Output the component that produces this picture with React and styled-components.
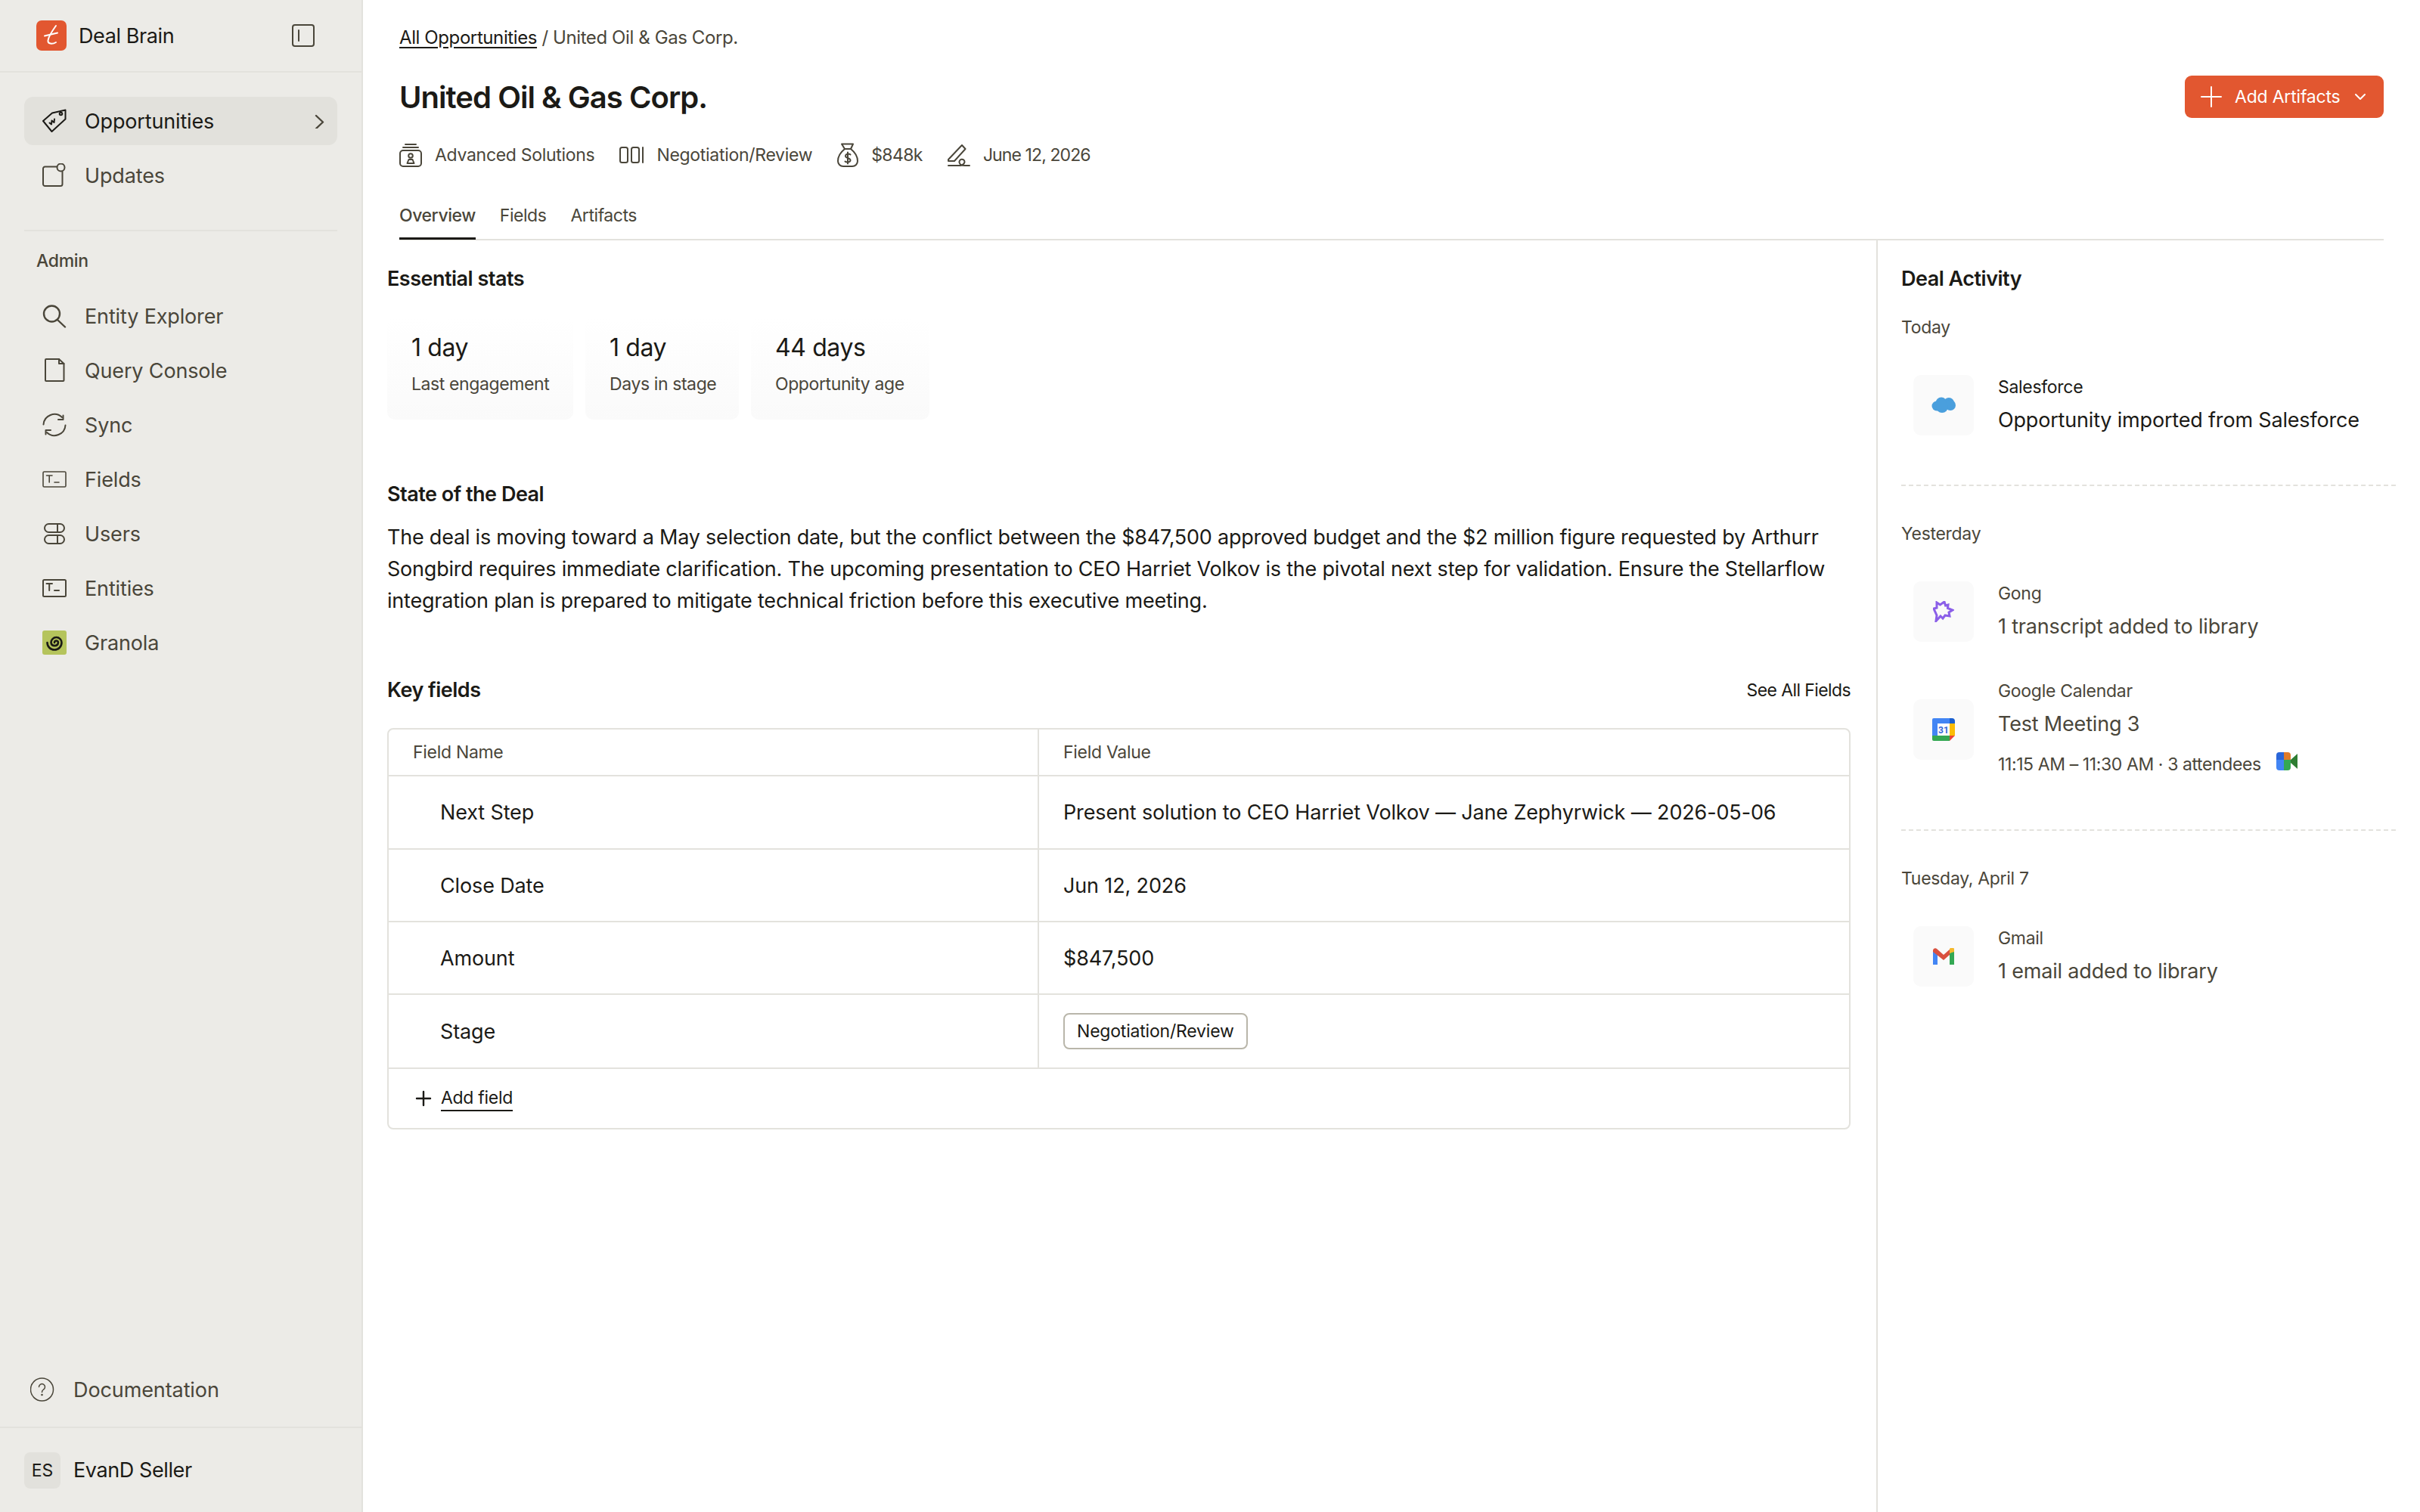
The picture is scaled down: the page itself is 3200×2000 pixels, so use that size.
import React from "react";
import styled, { createGlobalStyle } from "styled-components";

const ink = "#1b1a16";
const muted = "#4a463a";
const line = "#e3e2dd";
const orange = "#e25730";

const Global = createGlobalStyle`
  html, body { margin: 0; padding: 0; background: #fff; }
  body { font-family: Inter, "Liberation Sans", sans-serif; color: ${ink}; }
  * { box-sizing: border-box; }
`;

const Page = styled.div`
  display: flex;
  width: 3200px;
  height: 2000px;
  overflow: hidden;
`;

const Sidebar = styled.aside`
  width: 480px;
  flex: none;
  display: flex;
  flex-direction: column;
  background: #ecebe7;
  border-right: 2px solid ${line};
`;

const Brand = styled.div`
  height: 96px;
  flex: none;
  display: flex;
  align-items: center;
  padding: 0 62px 0 48px;
  border-bottom: 2px solid ${line};
`;

const BrandName = styled.span`
  margin-left: 16px;
  font-size: 27px;
  letter-spacing: -0.4px;
  flex: 1;
`;

const NavGroup = styled.nav`
  display: flex;
  flex-direction: column;
  gap: 8px;
  padding: 0 32px;
  margin-top: ${(p) => p.$top || 0}px;
`;

const NavItem = styled.div`
  height: 64px;
  display: flex;
  align-items: center;
  gap: 24px;
  padding: 0 16px 0 24px;
  border-radius: 12px;
  font-size: 27px;
  letter-spacing: -0.15px;
  color: ${(p) => (p.$active ? ink : muted)};
  background: ${(p) => (p.$active ? "#e2e1dc" : "transparent")};
  svg { flex: none; }
`;

const NavLabel = styled.span`
  flex: 1;
`;

const Rule = styled.div`
  height: 2px;
  margin: 40px 32px 0;
  background: ${line};
`;

const AdminLabel = styled.div`
  margin: 24px 48px 26px;
  font-size: 23px;
  line-height: 30px;
  letter-spacing: -0.3px;
  color: ${muted};
  font-weight: 500;
`;

const SideFoot = styled.div`
  margin-top: auto;
`;

const DocLink = styled.div`
  height: 64px;
  margin-bottom: 17px;
  display: flex;
  align-items: center;
  gap: 25px;
  padding-left: 40px;
  font-size: 27px;
  letter-spacing: -0.1px;
  color: ${muted};
`;

const UserRow = styled.div`
  height: 113px;
  border-top: 2px solid ${line};
  display: flex;
  align-items: center;
  gap: 17px;
  padding: 0 32px 0;
  font-size: 27px;
  letter-spacing: -0.4px;
`;

const Avatar = styled.div`
  width: 48px;
  height: 48px;
  border-radius: 8px;
  background: #e2e1dc;
  display: flex;
  align-items: center;
  justify-content: center;
  font-size: 23px;
  letter-spacing: 0;
`;

const Main = styled.main`
  flex: 1;
  min-width: 0;
  display: flex;
  flex-direction: column;
`;

const Header = styled.header`
  padding: 32px 48px 0;
`;

const Crumbs = styled.div`
  font-size: 24px;
  line-height: 36px;
  letter-spacing: -0.4px;
  color: ${muted};
  u { color: ${ink}; text-underline-offset: 4px; }
`;

const TitleRow = styled.div`
  display: flex;
  align-items: center;
  justify-content: space-between;
  margin-top: 30px;
  height: 60px;
`;

const Title = styled.h1`
  margin: 0;
  font-size: 40px;
  font-weight: 600;
  letter-spacing: -0.95px;
`;

const AddButton = styled.button`
  width: 263px;
  height: 56px;
  border: none;
  border-radius: 9px;
  background: ${orange};
  color: #fff;
  display: flex;
  align-items: center;
  padding: 0 24px 0 21px;
  font: inherit;
  font-size: 23px;
  letter-spacing: -0.2px;
  span { margin-left: 17px; flex: 1; text-align: left; }
`;

const Meta = styled.div`
  display: flex;
  align-items: center;
  margin-top: 30px;
  height: 34px;
`;

const MetaItem = styled.div`
  display: flex;
  align-items: center;
  gap: 17px;
  margin-right: 33px;
  font-size: 23px;
  letter-spacing: ${(p) => p.$ls || -0.3}px;
  color: ${muted};
`;

const Tabs = styled.div`
  display: flex;
  gap: 32px;
  margin-top: 45px;
  border-bottom: 2px solid ${line};
`;

const Tab = styled.div`
  position: relative;
  height: 49px;
  font-size: 23px;
  line-height: 36px;
  letter-spacing: -0.45px;
  color: ${muted};
  font-weight: ${(p) => (p.$active ? 500 : 400)};
  &::after {
    content: "";
    display: ${(p) => (p.$active ? "block" : "none")};
    position: absolute;
    left: 0;
    right: 0;
    bottom: -1px;
    height: 3px;
    background: ${ink};
  }
`;

const Body = styled.div`
  flex: 1;
  display: flex;
  min-height: 0;
`;

const Content = styled.section`
  width: 2001px;
  flex: none;
  padding: 33px 34px 0 32px;
`;

const SectionTitle = styled.h2`
  margin: ${(p) => p.$top || 0}px 0 0;
  font-size: 27px;
  line-height: 36px;
  font-weight: 600;
  letter-spacing: -0.5px;
`;

const Stats = styled.div`
  display: flex;
  gap: 16px;
  margin-top: 33px;
`;

const StatCard = styled.div`
  width: ${(p) => p.$w}px;
  height: 135px;
  padding: 18px 32px 0 32px;
  border-radius: 10px;
  background: linear-gradient(#fff, #fafafa);
  white-space: nowrap;
`;

const StatValue = styled.div`
  font-size: 32px;
  line-height: 44px;
  letter-spacing: -0.4px;
`;

const StatLabel = styled.div`
  margin-top: 11px;
  font-size: 23px;
  line-height: 30px;
  letter-spacing: -0.4px;
  color: ${muted};
`;

const Summary = styled.p`
  margin: 18px 0 0;
  font-size: 27px;
  line-height: 42px;
  letter-spacing: -0.22px;
`;

const KeyHead = styled.div`
  display: flex;
  align-items: center;
  justify-content: space-between;
  margin-top: 79px;
`;

const SeeAll = styled.span`
  font-size: 23px;
  letter-spacing: -0.6px;
`;

const Table = styled.div`
  margin-top: 32px;
  border: 2px solid ${line};
  border-radius: 8px;
`;

const Row = styled.div`
  display: grid;
  grid-template-columns: 858px 1fr;
  height: ${(p) => p.$h}px;
  border-bottom: 2px solid ${line};
`;

const Cell = styled.div`
  display: flex;
  align-items: center;
  padding-left: ${(p) => p.$pad}px;
  font-size: 27px;
  letter-spacing: -0.14px;
  & + & { border-left: 2px solid ${line}; padding-left: 32px; }
`;

const HeadCell = styled(Cell)`
  font-size: 23px;
  letter-spacing: -0.3px;
  color: ${muted};
`;

const Badge = styled.span`
  display: inline-flex;
  align-items: center;
  height: 48px;
  padding: 0 16px;
  border: 2px solid #b9b6aa;
  border-radius: 8px;
  font-size: 23px;
  letter-spacing: -0.2px;
`;

const AddField = styled.div`
  height: 78px;
  display: flex;
  align-items: center;
  gap: 12px;
  padding-left: 35px;
  font-size: 23px;
  letter-spacing: -0.3px;
  span {
    border-bottom: 2px solid ${ink};
    line-height: 32px;
  }
`;

const Activity = styled.aside`
  flex: 1;
  min-width: 0;
  padding: 33px 32px 0 31px;
  border-left: 2px solid ${line};
`;

const DayLabel = styled.div`
  margin-top: ${(p) => p.$top}px;
  font-size: 23px;
  line-height: 30px;
  letter-spacing: -0.3px;
  color: ${muted};
`;

const Event = styled.div`
  display: flex;
  align-items: center;
  gap: 32px;
  margin-top: 47px;
  margin-left: 16px;
`;

const EventIcon = styled.div`
  width: 80px;
  height: 80px;
  flex: none;
  border-radius: 10px;
  background: #fafafa;
  display: flex;
  align-items: center;
  justify-content: center;
`;

const EventText = styled.div`
  display: flex;
  flex-direction: column;
  padding-top: 2px;
  padding-bottom: ${(p) => (p.$tall ? 4 : 0)}px;
`;

const EventSource = styled.div`
  font-size: 23px;
  line-height: 30px;
  letter-spacing: -0.3px;
  color: ${(p) => (p.$dark ? ink : muted)};
`;

const EventTitle = styled.div`
  margin-top: 8px;
  font-size: 27px;
  line-height: 42px;
  letter-spacing: -0.18px;
  color: ${(p) => (p.$dark ? ink : muted)};
`;

const EventTime = styled.div`
  margin-top: 14px;
  display: flex;
  align-items: center;
  gap: 20px;
  font-size: 23px;
  line-height: 36px;
  letter-spacing: -0.4px;
  color: ${muted};
  svg { margin-top: -8px; }
`;

const Dash = styled.div`
  margin-top: 64px;
  height: 0;
  border-top: 2px dashed ${line};
`;

const Stroke = ({ size = 32, h, color = muted, sw = 2, children }) => (
  <svg width={size} height={h || size} viewBox={`0 0 ${size} ${h || size}`} fill="none" stroke={color} strokeWidth={sw} strokeLinecap="round" strokeLinejoin="round">
    {children}
  </svg>
);

const Logo = () => (
  <svg width="40" height="40" viewBox="0 0 40 40" fill="none">
    <rect width="40" height="40" rx="7" fill={orange} />
    <path d="M26 7C21 14 16 21 15.500 26.500C15 31 21 32 26 29" stroke="#fff" strokeWidth="2" strokeLinecap="round" />
    <path d="M11 20.500L28 16.500" stroke="#fff" strokeWidth="2" strokeLinecap="round" />
  </svg>
);

const TagIcon = () => (
  <Stroke color={ink}>
    <path d="M13 5.500L30.500 1.500V13.500L12.500 30L1 16Z" />
    <circle cx="24.500" cy="6.500" r="1.800" />
    <path d="M9.500 18.500L12 20.500L12.500 15.500L15.500 18L16 13.500" />
  </Stroke>
);

const UpdatesIcon = () => (
  <Stroke>
    <path d="M19 4.500H3.500A2.500 2.500 0 0 0 1 7V27.500A2.500 2.500 0 0 0 3.500 30H24A2.500 2.500 0 0 0 26.500 27.500V11" />
    <circle cx="24.500" cy="5.500" r="5" />
  </Stroke>
);

const SearchIcon = () => (
  <Stroke sw={2.4}>
    <circle cx="12.500" cy="13" r="10.500" />
    <path d="M20 21L30 30.500" />
  </Stroke>
);

const FileIcon = () => (
  <Stroke>
    <path d="M5 1H22L28.500 7V29A1 1 0 0 1 27.500 30H5A1 1 0 0 1 4 29V2A1 1 0 0 1 5 1Z" />
    <path d="M22 1V7H28.500" />
  </Stroke>
);

const SyncIcon = () => (
  <Stroke>
    <path d="M1.500 15.500A14.500 14.500 0 0 1 26 6" />
    <path d="M21 9H27.500V3.500" />
    <path d="M30.500 16.500A14.500 14.500 0 0 1 6 26" />
    <path d="M11 23H4.500V28.500" />
  </Stroke>
);

const FieldIcon = ({ top = 6, height = 20, sw = 1.600 }) => (
  <Stroke sw={sw}>
    <rect x="1" y={top} width="30" height={height} rx="1.500" />
    <path d={`M5.500 ${top + 5}H13M9.200 ${top + 5}V${top + 14}M16 ${top + 14}H22`} />
  </Stroke>
);

const UsersIcon = () => (
  <Stroke>
    <rect x="3" y="3" width="26" height="11" rx="5.500" />
    <rect x="3" y="18" width="26" height="11" rx="5.500" />
    <path d="M20 3V14M20 18V29" />
  </Stroke>
);

const GranolaIcon = () => (
  <svg width="32" height="32" viewBox="0 0 32 32" fill="none">
    <rect width="32" height="32" rx="3" fill="#b5c45c" />
    <path d="M16 16A2.500 2.500 0 0 1 21 16A4.800 4.800 0 0 1 11.500 16A7 7 0 0 1 25.500 16A9.500 9.500 0 0 1 6.500 16" stroke="#1b1a16" strokeWidth="2.600" strokeLinecap="round" />
  </svg>
);

const HelpIcon = () => (
  <Stroke size={32} sw={1.500}>
    <circle cx="15.500" cy="16" r="15" />
    <path d="M11.500 12.500A4 4 0 1 1 17.500 16C16 17 15.500 18 15.500 19.500" />
    <circle cx="15.500" cy="23" r="0.600" />
  </Stroke>
);

const JarIcon = () => (
  <Stroke size={30} h={32}>
    <path d="M8 2H22M5 6H25" />
    <rect x="1" y="10" width="28" height="21" rx="4" />
    <circle cx="15" cy="17" r="2.800" />
    <path d="M10.500 27L12.500 22H17.500L19.500 27Z" />
  </Stroke>
);

const BoardIcon = () => (
  <Stroke size={32} h={22}>
    <rect x="1" y="1" width="10" height="20" rx="2.500" />
    <rect x="16" y="1" width="10" height="20" rx="2.500" />
    <path d="M31 1V21" />
  </Stroke>
);

const BagIcon = () => (
  <Stroke size={28} h={32}>
    <path d="M6 1.500H21L18 8H10Z" />
    <path d="M10 8C5 12 1 18 1 24C1 28 4 31 8 31H20C24 31 27 28 27 24C27 18 23 12 18 8" />
    <path d="M17.500 15.500C16 14 11 14 11 17.500C11 20.500 17.500 19.500 17.500 23C17.500 26 12 26 10.500 24.500M14 12.500V27.500" />
  </Stroke>
);

const PenIcon = () => (
  <Stroke size={30} h={31}>
    <path d="M1 21L19 2L23.500 7L9 23H1Z" />
    <path d="M1 29H16C19 29 22 27 22.500 24.500A3.500 3.500 0 1 0 16 26C16.500 28 20 29 23 29H29" />
  </Stroke>
);

const Cloud = () => (
  <svg width="32" height="22" viewBox="0 0 32 22" fill="#4a9fdd">
    <circle cx="7" cy="12" r="6.500" />
    <circle cx="13" cy="8" r="7.500" />
    <circle cx="23" cy="8" r="7" />
    <circle cx="25" cy="11" r="7" />
    <circle cx="14" cy="13" r="8" />
  </svg>
);

const GongStar = () => (
  <svg width="28" height="28" viewBox="0 0 28 28" fill="none">
    <path d="M5 2L9.500 5L15 1L16.500 6L20 5L19.500 9.500L26 12L21 15L22 20L16 19L13 23L10 20L4 26.500L5 19L1 10L5 9Z" stroke="#8b5fe8" strokeWidth="3" strokeLinejoin="miter" />
  </svg>
);

const CalendarLogo = () => (
  <svg width="30" height="30" viewBox="0 0 30 30">
    <path d="M2 0H23V7H7V23H0V2A2 2 0 0 1 2 0Z" fill="#4285f4" />
    <rect x="7" y="7" width="16" height="16" fill="#fff" />
    <path d="M23 0H26A4 4 0 0 1 30 3V7H23Z" fill="#1a5fd0" />
    <rect x="23" y="7" width="7" height="16" fill="#fbbc04" />
    <path d="M0 23H23V30H2A2 2 0 0 1 0 28Z" fill="#34a853" />
    <path d="M23 23H30L23 30Z" fill="#ea4335" />
    <text x="15" y="20" fontSize="12" fontWeight="700" fill="#3367d6" textAnchor="middle" fontFamily="Roboto, sans-serif">31</text>
  </svg>
);

const MeetLogo = () => (
  <svg width="28" height="24" viewBox="0 0 28 24">
    <path d="M4 0H10V10H0V4A4 4 0 0 1 4 0Z" fill="#2a66d9" />
    <path d="M10 0H15A4 4 0 0 1 19 4V10H10Z" fill="#e07b29" />
    <path d="M0 10H10V24H4A4 4 0 0 1 0 20Z" fill="#4285f4" />
    <path d="M10 10H19V20A4 4 0 0 1 15 24H10Z" fill="#34a853" />
    <path d="M19 10L28 2V22L19 14Z" fill="#2e7d32" />
  </svg>
);

const GmailLogo = () => (
  <svg width="28" height="22" viewBox="0 0 28 22">
    <path d="M0 3V22H6V7Z" fill="#4285f4" />
    <path d="M28 3V22H22V7Z" fill="#34a853" />
    <path d="M0 3A3 3 0 0 1 5 1L14 9L23 1L22 9L14 16L0 5Z" fill="#d9503f" />
    <path d="M22 7V1.500A3 3 0 0 1 28 3V5Z" fill="#f5b92d" />
  </svg>
);

const topNav = [
  { label: "Opportunities", icon: <TagIcon />, active: true },
  { label: "Updates", icon: <UpdatesIcon /> },
];

const adminNav = [
  { label: "Entity Explorer", icon: <SearchIcon /> },
  { label: "Query Console", icon: <FileIcon /> },
  { label: "Sync", icon: <SyncIcon /> },
  { label: "Fields", icon: <FieldIcon /> },
  { label: "Users", icon: <UsersIcon /> },
  { label: "Entities", icon: <FieldIcon top={5} height={22} sw={2} /> },
  { label: "Granola", icon: <GranolaIcon /> },
];

const fields = [
  ["Next Step", "Present solution to CEO Harriet Volkov — Jane Zephyrwick — 2026-05-06", 97],
  ["Close Date", "Jun 12, 2026", 96],
  ["Amount", "$847,500", 96],
];

export default function App() {
  return (
    <Page>
      <Global />
      <Sidebar>
        <Brand>
          <Logo />
          <BrandName>Deal Brain</BrandName>
          <Stroke size={30}>
            <rect x="1" y="1" width="28" height="28" rx="3" />
            <path d="M9 8V22" />
          </Stroke>
        </Brand>
        <NavGroup $top={32}>
          {topNav.map((item) => (
            <NavItem key={item.label} $active={item.active}>
              {item.icon}
              <NavLabel>{item.label}</NavLabel>
              {item.active && (
                <Stroke size={14} h={20} sw={2.400}>
                  <path d="M2 3L11 11.500L2 20" />
                </Stroke>
              )}
            </NavItem>
          ))}
        </NavGroup>
        <Rule />
        <AdminLabel>Admin</AdminLabel>
        <NavGroup>
          {adminNav.map((item) => (
            <NavItem key={item.label}>
              {item.icon}
              <NavLabel>{item.label}</NavLabel>
            </NavItem>
          ))}
        </NavGroup>
        <SideFoot>
          <DocLink>
            <HelpIcon />
            Documentation
          </DocLink>
          <UserRow>
            <Avatar>ES</Avatar>
            EvanD Seller
          </UserRow>
        </SideFoot>
      </Sidebar>
      <Main>
        <Header>
          <Crumbs>
            <u>All Opportunities</u> / United Oil &amp; Gas Corp.
          </Crumbs>
          <TitleRow>
            <Title>United Oil &amp; Gas Corp.</Title>
            <AddButton>
              <Stroke size={28} color="#fff">
                <path d="M14 1V27M1 14H27" />
              </Stroke>
              <span>Add Artifacts</span>
              <Stroke size={14} h={10} color="#fff">
                <path d="M1 2L7 8L13 2" />
              </Stroke>
            </AddButton>
          </TitleRow>
          <Meta>
            <MetaItem><JarIcon />Advanced Solutions</MetaItem>
            <MetaItem><BoardIcon />Negotiation/Review</MetaItem>
            <MetaItem $ls={-0.6}><BagIcon />$848k</MetaItem>
            <MetaItem $ls={-0.9}><PenIcon />June 12, 2026</MetaItem>
          </Meta>
          <Tabs>
            <Tab $active>Overview</Tab>
            <Tab>Fields</Tab>
            <Tab>Artifacts</Tab>
          </Tabs>
        </Header>
        <Body>
          <Content>
            <SectionTitle>Essential stats</SectionTitle>
            <Stats>
              <StatCard $w={246}>
                <StatValue>1 day</StatValue>
                <StatLabel>Last engagement</StatLabel>
              </StatCard>
              <StatCard $w={203}>
                <StatValue>1 day</StatValue>
                <StatLabel>Days in stage</StatLabel>
              </StatCard>
              <StatCard $w={236}>
                <StatValue>44 days</StatValue>
                <StatLabel>Opportunity age</StatLabel>
              </StatCard>
            </Stats>
            <SectionTitle $top={81}>State of the Deal</SectionTitle>
            <Summary>
              The deal is moving toward a May selection date, but the conflict between the $847,500 approved budget and the $2 million figure requested by Arthurr Songbird requires immediate clarification. The upcoming presentation to CEO Harriet Volkov is the pivotal next step for validation. Ensure the Stellarflow integration plan is prepared to mitigate technical friction before this executive meeting.
            </Summary>
            <KeyHead>
              <SectionTitle>Key fields</SectionTitle>
              <SeeAll>See All Fields</SeeAll>
            </KeyHead>
            <Table>
              <Row $h={62}>
                <HeadCell $pad={32}>Field Name</HeadCell>
                <HeadCell>Field Value</HeadCell>
              </Row>
              {fields.map(([name, value, h]) => (
                <Row key={name} $h={h}>
                  <Cell $pad={68}>{name}</Cell>
                  <Cell>{value}</Cell>
                </Row>
              ))}
              <Row $h={98}>
                <Cell $pad={68}>Stage</Cell>
                <Cell><Badge>Negotiation/Review</Badge></Cell>
              </Row>
              <AddField>
                <Stroke size={22} color={ink} sw={2.400}>
                  <path d="M11 2V20M2 11H20" />
                </Stroke>
                <span>Add field</span>
              </AddField>
            </Table>
          </Content>
          <Activity>
            <SectionTitle>Deal Activity</SectionTitle>
            <DayLabel $top={31}>Today</DayLabel>
            <Event>
              <EventIcon><Cloud /></EventIcon>
              <EventText>
                <EventSource $dark>Salesforce</EventSource>
                <EventTitle $dark>Opportunity imported from Salesforce</EventTitle>
              </EventText>
            </Event>
            <Dash />
            <DayLabel $top={48}>Yesterday</DayLabel>
            <Event>
              <EventIcon><GongStar /></EventIcon>
              <EventText>
                <EventSource>Gong</EventSource>
                <EventTitle>1 transcript added to library</EventTitle>
              </EventText>
            </Event>
            <Event>
              <EventIcon><CalendarLogo /></EventIcon>
              <EventText $tall>
                <EventSource>Google Calendar</EventSource>
                <EventTitle>Test Meeting 3</EventTitle>
                <EventTime>11:15 AM – 11:30 AM · 3 attendees <MeetLogo /></EventTime>
              </EventText>
            </Event>
            <Dash />
            <DayLabel $top={48}>Tuesday, April 7</DayLabel>
            <Event>
              <EventIcon><GmailLogo /></EventIcon>
              <EventText>
                <EventSource>Gmail</EventSource>
                <EventTitle>1 email added to library</EventTitle>
              </EventText>
            </Event>
          </Activity>
        </Body>
      </Main>
    </Page>
  );
}
